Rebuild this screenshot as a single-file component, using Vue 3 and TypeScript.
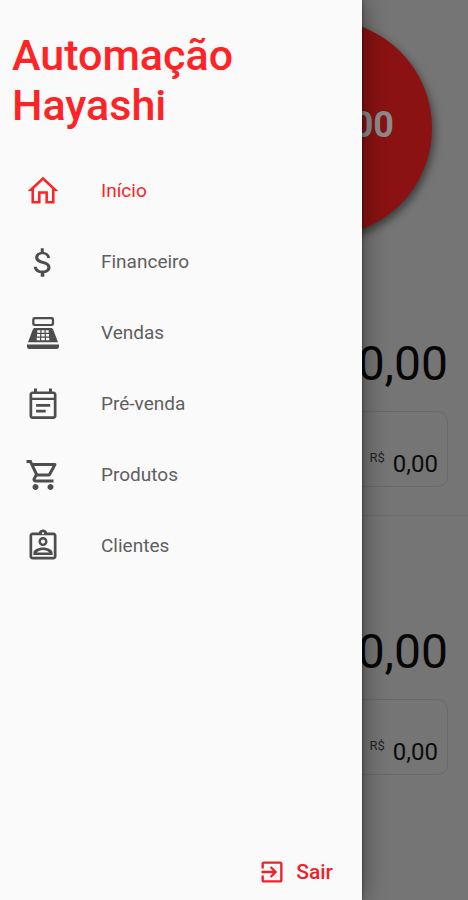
<script setup lang="ts">
interface MenuItem {
  label: string
  icon: string
  active?: boolean
}

const items: MenuItem[] = [
  {
    label: 'Início',
    active: true,
    icon: 'M12 2.5L22.2 12H19.7v8.3H13.6v-6.4h-3.2v6.4H4.3V12H1.8zM12 4.9L6 10.5v8.1h2.7v-6.4h6.6v6.4H18v-8.1z',
  },
  {
    label: 'Financeiro',
    icon: 'M12.5 2.8v2.5c2.4.3 4 1.8 4.2 4h-1.9c-.2-1.5-1.3-2.4-3.1-2.4-1.7 0-2.8.8-2.8 2 0 1.100.9 1.800 3.2 2.400 3.200.8 4.900 2 4.900 4.300 0 2.100-1.600 3.500-4.100 3.800v2.400h-2.400v-2.400c-2.700-.3-4.500-1.900-4.600-4.300h1.900c.2 1.600 1.600 2.600 3.800 2.600 2 0 3.300-.8 3.300-2.100 0-1.200-.9-1.900-3.400-2.500-3.100-.7-4.700-1.900-4.700-4.100 0-2 1.500-3.400 3.700-3.700V2.800z',
  },
  {
    label: 'Vendas',
    icon: 'M6.4 1.4h11.4a1.6 1.6 0 0 1 1.6 1.6v2.8a1.6 1.6 0 0 1-1.6 1.6H6.4a1.6 1.6 0 0 1-1.6-1.6V3a1.6 1.6 0 0 1 1.6-1.6zM6.9 2.8a.6.6 0 0 0-.6.6v2a.6.6 0 0 0 .6.6h10.4a.6.6 0 0 0 .6-.6v-2a.6.6 0 0 0-.6-.6zM6.6 8.6h10.8c.7 0 1.2.4 1.4 1l3.2 8.6H2l3.2-8.6c.2-.6.7-1 1.4-1zM8.2 10.2v1.7h2v-1.7zM11 10.2v1.7h2v-1.7zM13.8 10.2v1.7h2v-1.7zM8 12.7v1.7h2.1v-1.7zM10.9 12.7v1.7h2.2v-1.7zM13.9 12.7v1.7H16v-1.7zM7.8 15.2v1.7h2.2v-1.7zM10.8 15.2v1.7h2.4v-1.7zM14 15.2v1.7h2.2v-1.7zM1.3 19.6h21.4v1.3a1.7 1.7 0 0 1-1.7 1.7H3a1.7 1.7 0 0 1-1.7-1.7z',
  },
  {
    label: 'Pré-venda',
    icon: 'M19 3.600h-1V1.600h-2v2H8v-2H6v2H5c-1.110 0-2 .9-2 2V20c0 1.100.89 2 2 2h14c1.100 0 2-.9 2-2V5.600c0-1.100-.9-2-2-2zM19.200 20.200H4.800V9.400h14.400zM19.200 7.800H4.800V5.400h14.400zM7.400 12h9.400v1.800H7.400zm0 3.900h6.400v1.800H7.400z',
  },
  {
    label: 'Produtos',
    icon: 'M15.55 13c.75 0 1.41-.41 1.75-1.03l3.58-6.49c.37-.66-.11-1.48-.87-1.48H5.21l-.94-2H1v2h2l3.6 7.59-1.35 2.44C4.52 15.37 5.48 17 7 17h12v-2H7l1.1-2h7.45zM6.16 6h12.15l-2.76 5H8.53L6.16 6zM7 18c-1.1 0-1.99.9-1.99 2S5.9 22 7 22s2-.9 2-2-.9-2-2-2zm10 0c-1.1 0-1.99.9-1.99 2s.89 2 1.99 2 2-.9 2-2-.9-2-2-2z',
  },
  {
    label: 'Clientes',
    icon: 'M19 3h-4.18C14.4 1.84 13.3 1 12 1s-2.4.84-2.82 2H5c-1.1 0-2 .9-2 2v14c0 1.1.9 2 2 2h14c1.1 0 2-.9 2-2V5c0-1.1-.9-2-2-2zm-7-.25c.41 0 .75.34.75.75s-.34.75-.75.75-.75-.34-.75-.75.34-.75.75-.75zM19.200 19.200H4.800V4.800h14.400zM12 12c1.65 0 3-1.35 3-3s-1.35-3-3-3-3 1.35-3 3 1.35 3 3 3zm0-4.400c.77 0 1.400.63 1.400 1.400s-.63 1.400-1.400 1.400-1.400-.63-1.400-1.400.63-1.400 1.400-1.400zM5.600 16.580V18h12.800v-1.420c0-2.500-4.200-3.580-6.400-3.580s-6.400 1.080-6.400 3.580zM7.800 16.400c.8-1 2.700-1.700 4.200-1.700s3.400.7 4.200 1.700z',
  },
]

const summaries = [
  { total: '0,00', detail: '0,00' },
  { total: '0,00', detail: '0,00' },
]
</script>

<template>
  <div class="screen">
    <main class="page">
      <div class="badge">0,00</div>
      <section v-for="(s, i) in summaries" :key="i" class="summary">
        <p class="total">{{ s.total }}</p>
        <p class="card">
          <span class="currency">R$</span>
          <span class="amount">{{ s.detail }}</span>
        </p>
      </section>
    </main>

    <aside class="drawer">
      <h1 class="title">Automação Hayashi</h1>
      <nav>
        <ul class="menu">
          <li v-for="item in items" :key="item.label">
            <a href="#" class="link" :class="{ active: item.active }">
              <svg class="icon" viewBox="0 0 24 24" aria-hidden="true">
                <path :d="item.icon" fill-rule="evenodd" />
              </svg>
              <span>{{ item.label }}</span>
            </a>
          </li>
        </ul>
      </nav>
      <button type="button" class="logout">
        <svg class="logout-icon" viewBox="0 0 24 24" aria-hidden="true">
          <path
            d="M10.09 15.59L11.5 17l5-5-5-5-1.41 1.41L12.67 11H3v2h9.67l-2.58 2.59zM19 3H5c-1.11 0-2 .9-2 2v4h2V5h14v14H5v-4H3v4c0 1.1.89 2 2 2h14c1.1 0 2-.9 2-2V5c0-1.1-.9-2-2-2z"
          />
        </svg>
        <span>Sair</span>
      </button>
    </aside>
  </div>
</template>

<style>
body {
  background: #757575;
}
</style>

<style scoped>
.screen {
  position: relative;
  min-height: 100vh;
  overflow: hidden;
  font-family: Roboto, 'Liberation Sans', sans-serif;
}

.page {
  display: flex;
  flex-direction: column;
  padding-top: 20px;
}

.badge {
  display: flex;
  align-items: center;
  justify-content: flex-end;
  align-self: flex-end;
  box-sizing: border-box;
  width: 216px;
  height: 216px;
  margin-right: 36px;
  padding: 0 38px 6px 0;
  border-radius: 50%;
  background: #8a1212;
  box-shadow: 2px 4px 8px rgba(0, 0, 0, 0.5);
  color: #8c8c8c;
  font-size: 36px;
  font-weight: 700;
}

.summary {
  display: flex;
  flex-direction: column;
  padding: 100px 20px 28px;
}

.summary + .summary {
  padding-top: 108px;
  border-top: 1px solid #6b6b6b;
}

.total {
  margin: 0 0 19px;
  color: #060606;
  font-size: 48px;
  line-height: 56px;
  text-align: right;
}

.card {
  display: flex;
  align-items: flex-end;
  justify-content: flex-end;
  gap: 8px;
  box-sizing: border-box;
  min-height: 76px;
  margin: 0;
  padding: 8px 9px;
  border: 1px solid #696969;
  border-radius: 10px;
  color: #0c0c0c;
}

.currency {
  padding-bottom: 10px;
  color: #242424;
  font-size: 13px;
  line-height: 20px;
}

.amount {
  font-size: 24px;
  line-height: 28px;
}

.drawer {
  position: absolute;
  inset: 0 106px 0 0;
  display: flex;
  flex-direction: column;
  background: #fafafa;
  box-shadow: 0 0 24px rgba(0, 0, 0, 0.45), 0 0 3px rgba(0, 0, 0, 0.5);
}

.title {
  margin: 0;
  padding: 30px 12px 25px;
  color: #fc2427;
  font-size: 43px;
  font-weight: 500;
  line-height: 50px;
}

.menu {
  margin: 0;
  padding: 0;
  list-style: none;
}

.link {
  display: flex;
  align-items: center;
  gap: 40px;
  height: 71px;
  padding: 0 25px;
  color: #5f5f5f;
  font-size: 19px;
  text-decoration: none;
}

.link.active {
  color: #fc2427;
}

.icon {
  flex: none;
  width: 36px;
  height: 36px;
  fill: #4d4d4d;
}

.active .icon {
  fill: #fc2427;
}

.logout {
  display: flex;
  align-items: center;
  align-self: flex-end;
  gap: 10px;
  margin: auto 29px 14px 0;
  padding: 0;
  border: 0;
  background: none;
  color: #ee2226;
  font-family: inherit;
  font-size: 21px;
  font-weight: 500;
  line-height: 28px;
}

.logout-icon {
  width: 28px;
  height: 28px;
  fill: currentColor;
}
</style>
